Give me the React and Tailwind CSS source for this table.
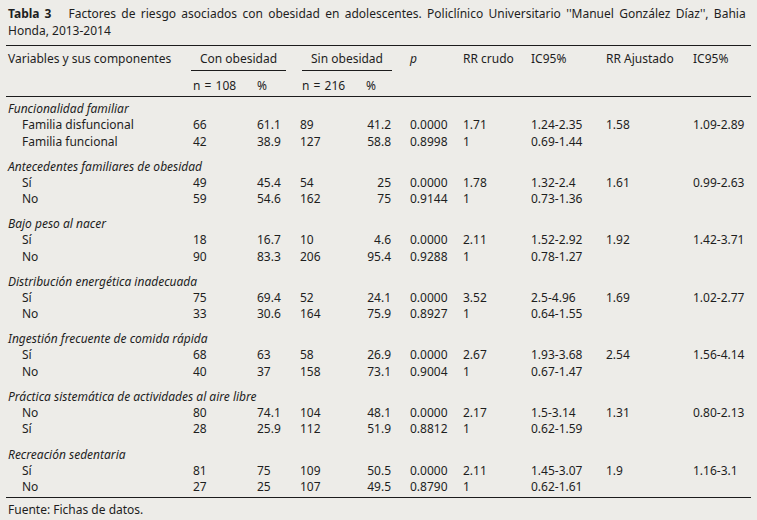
import React from 'react';

const groups = [
  {
    label: 'Funcionalidad familiar',
    rows: [
      ['Familia disfuncional', '66', '61.1', '89', '41.2', '0.0000', '1.71', '1.24-2.35', '1.58', '1.09-2.89'],
      ['Familia funcional', '42', '38.9', '127', '58.8', '0.8998', '1', '0.69-1.44', '', ''],
    ],
  },
  {
    label: 'Antecedentes familiares de obesidad',
    rows: [
      ['Sí', '49', '45.4', '54', '25', '0.0000', '1.78', '1.32-2.4', '1.61', '0.99-2.63'],
      ['No', '59', '54.6', '162', '75', '0.9144', '1', '0.73-1.36', '', ''],
    ],
  },
  {
    label: 'Bajo peso al nacer',
    rows: [
      ['Sí', '18', '16.7', '10', '4.6', '0.0000', '2.11', '1.52-2.92', '1.92', '1.42-3.71'],
      ['No', '90', '83.3', '206', '95.4', '0.9288', '1', '0.78-1.27', '', ''],
    ],
  },
  {
    label: 'Distribución energética inadecuada',
    rows: [
      ['Sí', '75', '69.4', '52', '24.1', '0.0000', '3.52', '2.5-4.96', '1.69', '1.02-2.77'],
      ['No', '33', '30.6', '164', '75.9', '0.8927', '1', '0.64-1.55', '', ''],
    ],
  },
  {
    label: 'Ingestión frecuente de comida rápida',
    rows: [
      ['Sí', '68', '63', '58', '26.9', '0.0000', '2.67', '1.93-3.68', '2.54', '1.56-4.14'],
      ['No', '40', '37', '158', '73.1', '0.9004', '1', '0.67-1.47', '', ''],
    ],
  },
  {
    label: 'Práctica sistemática de actividades al aire libre',
    rows: [
      ['No', '80', '74.1', '104', '48.1', '0.0000', '2.17', '1.5-3.14', '1.31', '0.80-2.13'],
      ['Sí', '28', '25.9', '112', '51.9', '0.8812', '1', '0.62-1.59', '', ''],
    ],
  },
  {
    label: 'Recreación sedentaria',
    rows: [
      ['Sí', '81', '75', '109', '50.5', '0.0000', '2.11', '1.45-3.07', '1.9', '1.16-3.1'],
      ['No', '27', '25', '107', '49.5', '0.8790', '1', '0.62-1.61', '', ''],
    ],
  },
];

const cols = 'grid grid-cols-[185px_64px_43px_64px_46px_53px_68px_75px_87px_58px]';

const Rule = () => <div className="h-px bg-[#1c1c1c] -ml-[2px] w-[745px]" />;

const DataRow = ({ row }) => (
  <div className={`${cols} leading-[16.5px]`}>
    <div className="pl-[14px]">{row[0]}</div>
    <div>{row[1]}</div>
    <div>{row[2]}</div>
    <div>{row[3]}</div>
    <div className="text-right pr-[19px]">{row[4]}</div>
    <div>{row[5]}</div>
    <div>{row[6]}</div>
    <div>{row[7]}</div>
    <div>{row[8]}</div>
    <div>{row[9]}</div>
  </div>
);

export default function App() {
  return (
    <div
      className="w-[757px] h-[520px] overflow-hidden bg-[#edece8] text-[#1e1e1e] text-[12px] pl-[8px]"
      style={{ fontFamily: '"Noto Sans", "DejaVu Sans", sans-serif' }}
    >
      {/* title */}
      <div className="pt-[5px] leading-[17px] mb-[6px] whitespace-nowrap">
        <span className="font-bold [word-spacing:2px]">Tabla 3</span>
        <span className="ml-[17px] [word-spacing:2.2px]">
          Factores de riesgo asociados con obesidad en adolescentes. Policlínico Universitario ''Manuel González Díaz'', Bahia
        </span>
        <br />
        Honda, 2013-2014
      </div>

      <Rule />

      {/* header */}
      <div className={`${cols} h-[25px] items-center leading-[17px]`}>
        <div>Variables y sus componentes</div>
        <div className="col-span-2 self-stretch flex items-center justify-center -ml-[2px] w-[95px] border-b border-[#1c1c1c]">
          Con obesidad
        </div>
        <div className="col-span-2 self-stretch flex items-center justify-center ml-[2px] w-[90px] border-b border-[#1c1c1c]">
          Sin obesidad
        </div>
        <div className="italic">p</div>
        <div>RR crudo</div>
        <div>IC95%</div>
        <div>RR Ajustado</div>
        <div>IC95%</div>
      </div>
      <div className={`${cols} h-[25px] pt-[6px] leading-[17px] [word-spacing:1px]`}>
        <div />
        <div>n = 108</div>
        <div>%</div>
        <div className="ml-[2px]">n = 216</div>
        <div className="pl-[2px]">%</div>
      </div>

      <Rule />

      <div className="flex flex-col gap-[7.6px] pt-[3px]">
        {groups.map((g) => (
          <div key={g.label}>
            <div className="italic leading-[17px]">{g.label}</div>
            {g.rows.map((r) => (
              <DataRow key={g.label + r[0]} row={r} />
            ))}
          </div>
        ))}
      </div>

      <div className="mt-[1px]">
        <Rule />
      </div>
      <div className="pt-[3px] leading-[17px]">Fuente: Fichas de datos.</div>
    </div>
  );
}
